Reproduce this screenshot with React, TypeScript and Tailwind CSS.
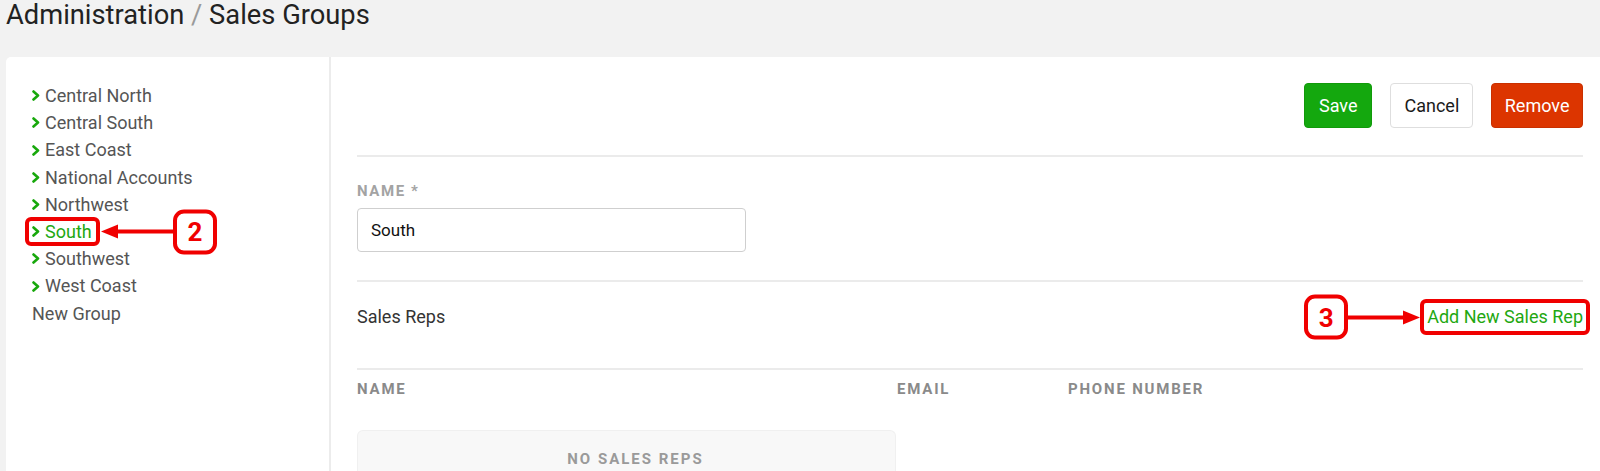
import React from "react";

const Chevron = () => (
  <svg width="8" height="11" viewBox="0 0 8 11" className="mr-[5px] shrink-0">
    <polyline points="1.5,1.5 6,5.5 1.5,9.5" fill="none" stroke="#18a80c" strokeWidth="2.6" strokeLinecap="round" strokeLinejoin="round" />
  </svg>
);

const groups = ["Central North", "Central South", "East Coast", "National Accounts", "Northwest", "South", "Southwest", "West Coast"];

function Badge({ n }: { n: string }) {
  return (
    <div className="flex h-[45px] w-[44px] shrink-0 items-center justify-center rounded-[11px] border-[4px] border-[#f00000] bg-white text-[26px] font-bold leading-none text-[#f00000]">
      {n}
    </div>
  );
}

export default function App() {
  return (
    <div className="min-h-[471px] bg-[#f2f2f2] font-['Roboto',sans-serif]">
      <h1 className="h-[30px] pl-[6px] text-[27.3px] leading-[30px] text-[#222]">
        Administration <span className="text-[#9a9a9a]">/</span> Sales Groups
      </h1>
      <div className="ml-[6px] mt-[27px] flex min-h-[414px] rounded-tl-[5px] bg-white">
        <aside className="w-[325px] shrink-0 border-r-2 border-[#ececec] pl-[26px] pt-[25px]">
          <ul className="text-[18px] leading-[27.2px] text-[#555]">
            {groups.map((g) => (
              <li key={g} className="flex">
                {g === "South" ? (
                  <div className="relative flex items-center text-[#22a812]">
                    <Chevron />
                    <span>{g}</span>
                    <div className="pointer-events-none absolute -left-[7px] -right-[8px] -top-[1px] h-[29px] rounded-[6px] border-[4px] border-[#f00000]" />
                    <div className="pointer-events-none absolute left-[69px] top-1/2 flex -translate-y-1/2 items-center">
                      <svg width="72" height="18" viewBox="0 0 72 18">
                        <polygon points="0,9 17,2 17,16" fill="#f00000" />
                        <rect x="16" y="7" width="56" height="4" fill="#f00000" />
                      </svg>
                      <Badge n="2" />
                    </div>
                  </div>
                ) : (
                  <div className="flex items-center">
                    <Chevron />
                    <span>{g}</span>
                  </div>
                )}
              </li>
            ))}
            <li>New Group</li>
          </ul>
        </aside>
        <main className="flex-1 pl-[26px] pr-[17px] pt-[26px]">
          <div className="flex justify-end gap-[18px] text-[18px]">
            <button className="h-[45px] rounded-[4px] border border-[#119a0a] bg-[#14a80e] px-[14px] text-white">Save</button>
            <button className="h-[45px] rounded-[4px] border border-[#dedede] bg-white px-[13px] text-[#1a1a1a]">Cancel</button>
            <button className="h-[45px] rounded-[4px] border border-[#c93000] bg-[#dc3500] px-[12.5px] text-white">Remove</button>
          </div>
          <div className="mt-[27px] h-[2px] bg-[#ebebeb]" />
          <div className="mt-[26px] text-[15px] font-bold leading-[16px] tracking-[1.6px] text-[#a3a3a3]">NAME *</div>
          <input
            readOnly
            value="South"
            className="mt-[9px] block h-[44px] w-[389px] rounded-[4px] border border-[#cfcfcf] px-[13px] text-[17px] text-[#111] outline-none"
          />
          <div className="mt-[28px] h-[2px] bg-[#ebebeb]" />
          <div className="mt-[24px] flex items-center justify-between text-[18px] leading-[22px]">
            <span className="text-[#333]">Sales Reps</span>
            <div className="relative text-[#1fa811]">
              <span>Add New Sales Rep</span>
              <div className="pointer-events-none absolute -left-[7px] -right-[7px] -top-[7px] h-[36px] rounded-[6px] border-[4px] border-[#f00000]" />
              <div className="pointer-events-none absolute right-[calc(100%+7px)] top-1/2 flex -translate-y-1/2 items-center">
                <Badge n="3" />
                <svg width="72" height="18" viewBox="0 0 72 18">
                  <rect x="0" y="7" width="56" height="4" fill="#f00000" />
                  <polygon points="72,9 55,2 55,16" fill="#f00000" />
                </svg>
              </div>
            </div>
          </div>
          <div className="mt-[40px] h-[2px] bg-[#ebebeb]" />
          <div className="mt-[11px] grid grid-cols-[540px_171px_1fr] text-[15px] font-bold leading-[16px] tracking-[1.8px] text-[#8a8a8a]">
            <span>NAME</span>
            <span>EMAIL</span>
            <span>PHONE NUMBER</span>
          </div>
          <div className="mt-[33px] h-[60px] w-[539px] rounded-t-[6px] border border-b-0 border-[#f0f0f0] bg-[#f8f8f8] pl-[18px] pt-[20px] text-center text-[15px] font-bold leading-[16px] tracking-[2px] text-[#9a9a9a]">
            NO SALES REPS
          </div>
        </main>
      </div>
    </div>
  );
}
